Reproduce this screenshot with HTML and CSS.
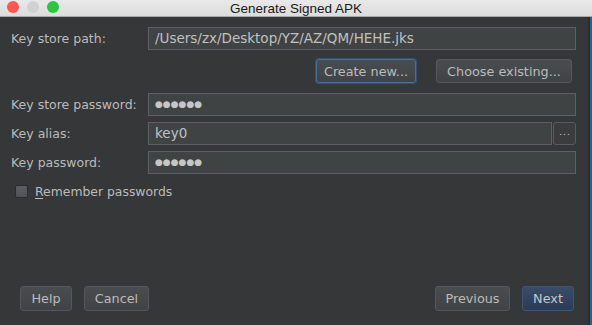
FILE: index.html
```html
<!DOCTYPE html>
<html lang="en">
<head>
    <meta charset="UTF-8">
    <meta name="viewport" content="width=device-width, initial-scale=1.0">
    <title>Generate Signed APK</title>
    <link rel="stylesheet" href="styles.css">
</head>
<body>
    <div class="window">
        <div class="title-bar">
            <div class="lights">
                <span class="light red"></span>
                <span class="light gray"></span>
                <span class="light green"></span>
            </div>
            <div class="title">Generate Signed APK</div>
        </div>

        <div class="content">
            <div class="row">
                <label class="label">Key store path:</label>
                <div class="field">/Users/zx/Desktop/YZ/AZ/QM/HEHE.jks</div>
            </div>

            <div class="store-buttons">
                <button class="btn focused">Create new...</button>
                <button class="btn existing">Choose existing...</button>
            </div>

            <div class="row">
                <label class="label">Key store password:</label>
                <div class="field dots">●●●●●●</div>
            </div>
            <div class="row">
                <label class="label">Key alias:</label>
                <div class="field">key0</div>
                <button class="browse">...</button>
            </div>
            <div class="row">
                <label class="label">Key password:</label>
                <div class="field dots">●●●●●●</div>
            </div>

            <div class="remember">
                <span class="checkbox"></span>
                <span><u>R</u>emember passwords</span>
            </div>
        </div>

        <div class="footer">
            <div class="group">
                <button class="btn small help">Help</button>
                <button class="btn small cancel">Cancel</button>
            </div>
            <div class="group">
                <button class="btn small previous">Previous</button>
                <button class="btn small default">Next</button>
            </div>
        </div>
    </div>
</body>
</html>
```

FILE: styles.css
```css
body {
    margin: 0;
    width: 592px;
    height: 325px;
    overflow: hidden;
    background-color: #0b6c9f;
    font-family: "DejaVu Sans", sans-serif;
    color: #bbbbbb;
}
.window {
    width: 592px;
    height: 325px;
    display: flex;
    flex-direction: column;
}
.title-bar {
    position: relative;
    height: 16px;
    background: linear-gradient(#e9e9e9, #dcdcdc);
    border-bottom: 1px solid #a9a9a9;
    display: flex;
    align-items: center;
    justify-content: center;
}
.lights {
    position: absolute;
    left: 7px;
    top: 1px;
    display: flex;
    gap: 8px;
}
.light {
    width: 12px;
    height: 12px;
    border-radius: 50%;
}
.red {
    background-color: #fc5753;
}
.gray {
    background-color: #d1d1d1;
}
.green {
    background-color: #2ac63d;
}
.title {
    font-family: "Liberation Sans", Arial, sans-serif;
    font-size: 13.5px;
    color: #1a1a1a;
}
.content {
    flex: 1;
    background-color: #363739;
    margin-right: 2px;
    border-right: 2px solid #2c2d2e;
    padding: 10px 12px 0 11px;
    display: flex;
    flex-direction: column;
}
.row {
    display: flex;
    align-items: center;
    height: 23px;
}
.row + .row {
    margin-top: 6px;
}
.label {
    width: 137px;
    font-size: 12.5px;
    flex-shrink: 0;
}
.field {
    flex: 1;
    height: 23px;
    box-sizing: border-box;
    background-color: #404344;
    border: 1px solid #5d6062;
    padding: 0 6px;
    font-size: 13.5px;
    line-height: 21px;
    white-space: nowrap;
    color: #c0c0c0;
}
.field.dots {
    font-size: 9px;
    color: #c6c6c6;
}
.browse {
    width: 23px;
    height: 23px;
    margin-left: 1px;
    box-sizing: border-box;
    background-color: #3a3c3e;
    border: 1px solid #595c5e;
    border-radius: 3px;
    color: #cccccc;
    font-family: "DejaVu Sans", sans-serif;
    font-size: 9px;
    letter-spacing: 1px;
    padding: 0 0 3px 1px;
}
.store-buttons {
    display: flex;
    justify-content: flex-end;
    gap: 20px;
    padding-right: 4px;
    margin: 9px 0 10px;
}
.btn {
    height: 24px;
    box-sizing: border-box;
    padding: 0;
    background: linear-gradient(#4a4d50, #404345);
    border: 1px solid #55585a;
    border-radius: 3px;
    color: #bbbbbb;
    font-family: "DejaVu Sans", sans-serif;
    font-size: 12.8px;
    white-space: nowrap;
}
.btn.focused {
    width: 100px;
    border-color: #4b6e95;
    box-shadow: 0 0 0 1px #355275;
}
.btn.existing {
    width: 136px;
}
.remember {
    display: flex;
    align-items: center;
    gap: 7px;
    margin: 10px 0 0 4px;
    font-size: 12.4px;
}
.checkbox {
    width: 13px;
    height: 13px;
    box-sizing: border-box;
    background: linear-gradient(#5c5f62, #505356);
    border: 1px solid #2a2b2d;
    border-radius: 2px;
}
.remember u {
    text-decoration-thickness: 1px;
    text-underline-offset: 2px;
}
.footer {
    background-color: #363739;
    margin-right: 2px;
    border-right: 2px solid #2c2d2e;
    padding: 0 14px 14px 20px;
    display: flex;
    justify-content: space-between;
}
.group {
    display: flex;
    gap: 12px;
}
.btn.small {
    height: 25px;
}
.help {
    width: 52px;
}
.cancel {
    width: 65px;
}
.previous {
    width: 75px;
}
.btn.default {
    width: 52px;
    background: linear-gradient(#384d6a, #2b3b54);
    border-color: #3e5475;
    color: #c4c8cc;
}
```
